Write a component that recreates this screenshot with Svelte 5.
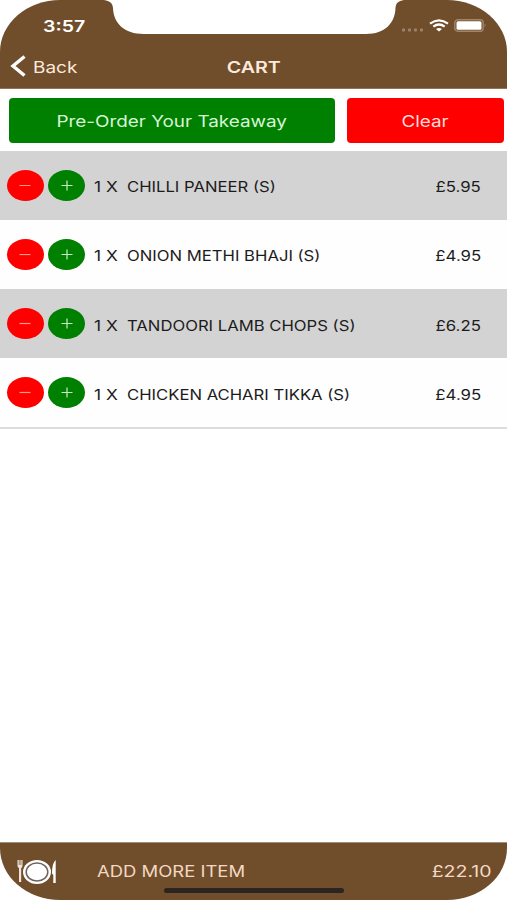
<script lang="ts">
  interface CartItem {
    id: number;
    qty: number;
    name: string;
    price: number;
  }

  let items: CartItem[] = $state([
    { id: 1, qty: 1, name: 'CHILLI PANEER (S)', price: 5.95 },
    { id: 2, qty: 1, name: 'ONION METHI BHAJI (S)', price: 4.95 },
    { id: 3, qty: 1, name: 'TANDOORI LAMB CHOPS (S)', price: 6.25 },
    { id: 4, qty: 1, name: 'CHICKEN ACHARI TIKKA (S)', price: 4.95 }
  ]);

  let total = $derived(items.reduce((sum, item) => sum + item.qty * item.price, 0));

  function changeQty(item: CartItem, step: number) {
    item.qty += step;
    items = items.filter((i) => i.qty > 0);
  }
</script>

<div class="phone">
  <header>
    <svg class="notch" width="300" height="35" viewBox="0 0 300 35">
      <path d="M0 0C6 1 8.500 3 9 8C9.500 23 20 34 40 34H262C281 34 291 23 291.500 8C292 3 294 1 300 0Z" fill="#fff" />
    </svg>
    <div class="status-bar">
      <span class="time wide">3:57</span>
      <div class="status-icons">
        <svg width="24" height="6" viewBox="0 0 24 6" fill="#9c8168">
          <circle cx="2.500" cy="3" r="1.700" />
          <circle cx="8.500" cy="3" r="1.700" />
          <circle cx="14.500" cy="3" r="1.700" />
          <circle cx="20.500" cy="3" r="1.700" />
        </svg>
        <svg class="wifi" width="20" height="13" viewBox="0 0 20 13" fill="none" stroke="#fff" stroke-width="2.200">
          <path d="M1 4.600Q10 -2 19 4.600" />
          <path d="M4.300 7.600Q10 3.400 15.700 7.600" />
          <path d="M7 10Q10 7.800 13 10L10 12.400Z" fill="#fff" stroke="none" />
        </svg>
        <svg class="battery" width="33" height="13" viewBox="0 0 33 13">
          <rect x="0.800" y="0.800" width="28.400" height="11.400" rx="3" fill="none" stroke="#a1866b" stroke-width="1.400" />
          <rect x="2.500" y="2.200" width="25" height="8.600" rx="1.500" fill="#fff" />
          <path d="M30.600 4.500Q32.600 6.300 30.600 8.300Z" fill="#a1866b" />
        </svg>
      </div>
    </div>
    <nav>
      <button class="back">
        <svg width="16" height="22" viewBox="0 0 16 22" fill="none" stroke="#fff" stroke-width="3.400">
          <path d="M14.500 1.500L3 11L14.500 20.500" />
        </svg>
        <span class="wide">Back</span>
      </button>
      <h1><span class="wide">CART</span></h1>
    </nav>
  </header>

  <div class="actions">
    <button class="pre-order"><span class="wide">Pre-Order Your Takeaway</span></button>
    <button class="clear" onclick={() => (items = [])}><span class="wide">Clear</span></button>
  </div>

  <ul class="cart">
    {#each items as item (item.id)}
      <li>
        <button class="round minus" aria-label="Remove one" onclick={() => changeQty(item, -1)}>
          <svg width="12" height="11" viewBox="0 0 12 11"><path d="M0.500 5.500H11.500" /></svg>
        </button>
        <button class="round plus" aria-label="Add one" onclick={() => changeQty(item, 1)}>
          <svg width="12" height="11" viewBox="0 0 12 11"><path d="M0.500 5.500H11.500M6 0.500V10.500" /></svg>
        </button>
        <span class="qty wide">{item.qty} X</span>
        <span class="name wide">{item.name}</span>
        <span class="price wide">£{item.price.toFixed(2)}</span>
      </li>
    {/each}
  </ul>

  <footer>
    <svg class="plate" width="40" height="26" viewBox="0 0 40 26">
      <path d="M0.500 1V6.500Q0.500 8.500 2 9V23H4.200V9Q5.500 8.500 5.500 6.500V1" fill="#efe4da" />
      <path d="M2.200 1V6M3.900 1V6" stroke="#744e2b" stroke-width="0.700" />
      <ellipse cx="20" cy="13" rx="14" ry="12" fill="#fff" />
      <ellipse cx="20" cy="13" rx="10.800" ry="9" fill="#fff" stroke="#70645a" stroke-width="1.500" />
      <path d="M38.700 1V24H36.300V16L35 14.500Q35 4 38.700 1Z" fill="#fff" />
    </svg>
    <span class="add-more wide">ADD MORE ITEM</span>
    <span class="total wide">£{total.toFixed(2)}</span>
    <div class="home-indicator"></div>
  </footer>
</div>

<style>
  :global(body) {
    background: #fff;
  }

  .phone {
    display: flex;
    flex-direction: column;
    position: relative;
    height: 900px;
    border-radius: 60px / 52px;
    overflow: hidden;
    background: #fff;
    color: #1c1c1c;
    font-family: Inter, "Liberation Sans", sans-serif;
  }

  button {
    padding: 0;
    border: none;
    background: none;
    color: inherit;
    font: inherit;
    cursor: pointer;
  }

  /* extended letterforms used across the app */
  .wide {
    display: inline-block;
    white-space: pre;
    transform: scaleX(1.19);
    transform-origin: left center;
  }

  header {
    position: relative;
    box-sizing: border-box;
    height: 89px;
    background: #704d2b;
    border-bottom: 1px solid #8f745a;
    color: #fbe9dc;
  }

  .notch {
    position: absolute;
    top: 0;
    left: 104px;
  }

  .status-bar {
    display: flex;
    justify-content: space-between;
    align-items: center;
    height: 44px;
    padding: 7px 20.5px 0 43px;
    box-sizing: border-box;
  }

  .time {
    font-size: 16px;
    font-weight: 600;
    color: #fff;
    transform: scaleX(1.22);
  }

  .status-icons {
    display: flex;
    align-items: center;
  }

  .status-icons svg:first-child {
    margin-top: 8px;
  }

  .wifi {
    margin-left: 4px;
  }

  .battery {
    margin-left: 5px;
  }

  nav {
    display: grid;
    grid-template-columns: 1fr auto 1fr;
    align-items: center;
    height: 44px;
    padding: 0 10px;
  }

  .back {
    display: flex;
    align-items: center;
    gap: 7px;
    font-size: 16.5px;
  }

  .back .wide {
    margin-top: 1px;
    transform: scaleX(1.15);
  }

  h1 {
    margin: 2px 0 0;
    font-size: 16.5px;
    font-weight: 600;
  }

  h1 .wide,
  .actions .wide {
    transform-origin: center;
  }

  .actions {
    display: flex;
    gap: 12px;
    height: 45px;
    padding: 8.6px 3.5px 8px 9px;
    color: #d9f5d6;
    font-size: 16px;
  }

  .actions button {
    padding-top: 2px;
    border-radius: 4px;
  }

  .actions .wide {
    transform: scaleX(1.18);
  }

  .pre-order {
    flex: 326;
    background: #008000;
  }

  .clear {
    flex: 157;
    background: #f00;
    color: #ffdcd6;
  }

  .cart {
    margin: 0;
    padding: 0;
    list-style: none;
    border-bottom: 2px solid #dcdcdc;
  }

  .cart li {
    display: flex;
    align-items: center;
    height: 69.2px;
    padding: 0 26px 0 6.5px;
    background: #fefefe;
    font-size: 14px;
  }

  .cart li:nth-child(odd) {
    background: #d3d3d3;
  }

  .round {
    display: flex;
    align-items: center;
    justify-content: center;
    width: 37px;
    height: 31px;
    margin-right: 4.5px;
    border-radius: 50%;
  }

  .round svg {
    fill: none;
    stroke: #cbe8c8;
    stroke-width: 1.2;
  }

  .minus {
    background: #f00;
  }

  .minus svg {
    stroke: #ff9a90;
  }

  .plus {
    background: #008000;
  }

  .qty {
    width: 29px;
    margin: 3px 0 0 4.5px;
    transform: scaleX(1.24);
  }

  .name {
    margin: 3px 0 0 4px;
  }

  .price {
    margin: 3px 0 0 auto;
    transform: scaleX(1.2);
    transform-origin: right center;
  }

  footer {
    position: relative;
    display: flex;
    align-items: center;
    box-sizing: border-box;
    height: 58px;
    margin-top: auto;
    padding: 0 15px 0 17px;
    border-top: 1px solid #a58e79;
    background: #704d2b;
    color: #f3d8c3;
    font-size: 15.5px;
  }

  .add-more {
    margin-left: 40px;
  }

  .total {
    margin-left: auto;
    transform: scaleX(1.26);
    transform-origin: right center;
  }

  .home-indicator {
    position: absolute;
    left: 164px;
    bottom: 7px;
    width: 180px;
    height: 5px;
    border-radius: 3px;
    background: #2b2521;
  }
</style>
